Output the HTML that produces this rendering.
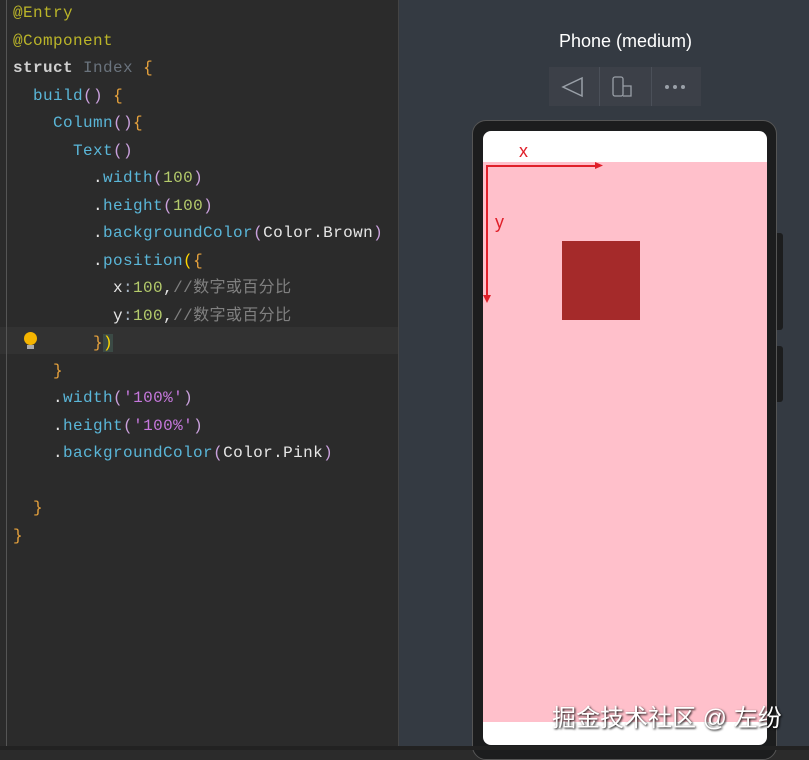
<!DOCTYPE html><html><head><meta charset="utf-8"><style>
body{margin:0;width:809px;height:750px;overflow:hidden;background:#2b2b2b;position:relative;font-family:"Liberation Sans",sans-serif}
#ed{position:absolute;left:0;top:0;width:398px;height:750px;background:#2b2b2b}
.hl{position:absolute;left:0;top:327px;width:398px;height:27px;background:#323232}
.ln{position:absolute;left:13px;font:16px/27px "Liberation Mono","Noto Sans CJK SC",monospace;letter-spacing:0.4px;white-space:pre;color:#a9b7c6}
.a{color:#bbb529}.k{font-weight:bold;color:#d0d0d0}.g{color:#6a737d}.o{color:#e8a33d}.f{color:#5ab6d8}.n{color:#b5cc6c}.p{color:#c678dd}.w{color:#e6e6e6}.c{color:#808080}.q{color:#c9a0dc}
.gut{position:absolute;left:6px;width:1px;background:#555}
#rp{position:absolute;left:398px;top:0;width:411px;height:746px;background:#343a42;border-left:1px solid #444}
.wm{position:absolute;left:552px;top:698px;color:#fff;font-size:24px;font-family:'Liberation Sans','Noto Sans CJK SC',sans-serif;text-shadow:1px 1px 2px #000;white-space:nowrap}
</style></head><body>
<div id="ed"><div class="hl"></div>
<div class="gut" style="top:0;height:750px;left:6px"></div>
<div class="ln" style="top:0px"><span class="a">@Entry</span></div>
<div class="ln" style="top:28px"><span class="a">@Component</span></div>
<div class="ln" style="top:55px"><span class="k">struct</span> <span class="g">Index</span> <span class="o">{</span></div>
<div class="ln" style="top:83px">  <span class="f">build</span><span class="q">()</span> <span class="o">{</span></div>
<div class="ln" style="top:110px">    <span class="f">Column</span><span class="q">()</span><span class="o">{</span></div>
<div class="ln" style="top:138px">      <span class="f">Text</span><span class="q">()</span></div>
<div class="ln" style="top:165px">        <span class="w">.</span><span class="f">width</span><span class="q">(</span><span class="n">100</span><span class="q">)</span></div>
<div class="ln" style="top:193px">        <span class="w">.</span><span class="f">height</span><span class="q">(</span><span class="n">100</span><span class="q">)</span></div>
<div class="ln" style="top:220px">        <span class="w">.</span><span class="f">backgroundColor</span><span class="q">(</span><span class="w">Color.Brown</span><span class="q">)</span></div>
<div class="ln" style="top:248px">        <span class="w">.</span><span class="f">position</span><span style="color:#ffd700">(</span><span class="o">{</span></div>
<div class="ln" style="top:275px">          <span class="w">x</span>:<span class="n">100</span><span class="w">,</span><span class="c">//数字或百分比</span></div>
<div class="ln" style="top:303px">          <span class="w">y</span>:<span class="n">100</span><span class="w">,</span><span class="c">//数字或百分比</span></div>
<div class="ln" style="top:330px">        <span class="o">}</span><span style="color:#ffd700;background:#3b4a45">)</span></div>
<div style="position:absolute;left:24px;top:332px;width:13px;height:13px;border-radius:50%;background:#f4b400"></div>
<div style="position:absolute;left:27px;top:345px;width:7px;height:4px;background:#aaa"></div>
<div class="ln" style="top:358px">    <span class="o">}</span></div>
<div class="ln" style="top:385px">    <span class="w">.</span><span class="f">width</span><span class="q">(</span><span class="p">'100%'</span><span class="q">)</span></div>
<div class="ln" style="top:413px">    <span class="w">.</span><span class="f">height</span><span class="q">(</span><span class="p">'100%'</span><span class="q">)</span></div>
<div class="ln" style="top:440px">    <span class="w">.</span><span class="f">backgroundColor</span><span class="q">(</span><span class="w">Color.Pink</span><span class="q">)</span></div>
<div class="ln" style="top:495px">  <span class="o">}</span></div>
<div class="ln" style="top:523px"><span class="o">}</span></div>
</div>
<div id="rp">
<div style="position:absolute;width:411px;top:31px;text-align:center;color:#fff;font-size:18px;left:21px">Phone (medium)</div>
<div style="position:absolute;left:150px;top:67px;width:152px;height:39px;background:#3c4048"></div>
<div style="position:absolute;left:200px;top:67px;width:1px;height:39px;background:#4b5059"></div>
<div style="position:absolute;left:252px;top:67px;width:1px;height:39px;background:#4b5059"></div>
<svg style="position:absolute;left:150px;top:67px" width="152" height="39"><path d="M33 11 L14 20 L33 29Z" fill="none" stroke="#9aa0a8" stroke-width="1.5"/><rect x="64" y="10" width="10" height="19" rx="2" fill="none" stroke="#9aa0a8" stroke-width="1.3"/><path d="M74 19 h8 v10 h-8" fill="none" stroke="#9aa0a8" stroke-width="1.3"/><circle cx="118" cy="20" r="2" fill="#9aa0a8"/><circle cx="126" cy="20" r="2" fill="#9aa0a8"/><circle cx="134" cy="20" r="2" fill="#9aa0a8"/></svg>
</div>
<div style="position:absolute;left:472px;top:120px;width:305px;height:640px;border-radius:14px;background:#1c1d1e;border:1px solid #555;box-sizing:border-box"></div>
<div style="position:absolute;left:777px;top:233px;width:6px;height:97px;background:#1c1d1e;border-radius:0 3px 3px 0"></div>
<div style="position:absolute;left:777px;top:346px;width:6px;height:56px;background:#1c1d1e;border-radius:0 3px 3px 0"></div>
<div style="position:absolute;left:483px;top:131px;width:284px;height:614px;background:#fff;border-radius:8px;overflow:hidden">
<div style="position:absolute;left:0;top:31px;width:284px;height:560px;background:#ffc0cb"></div>
<div style="position:absolute;left:79px;top:110px;width:78px;height:79px;background:#a52a2a"></div>
</div>
<svg style="position:absolute;left:483px;top:131px" width="200" height="180"><text x="36" y="26" fill="#e0202a" font-size="18" font-family="Liberation Sans">x</text><text x="12" y="97" fill="#e0202a" font-size="18" font-family="Liberation Sans">y</text><path d="M3 35 H112" stroke="#e0202a" stroke-width="2"/><path d="M112 31 L120 34.5 L112 38Z" fill="#e0202a"/><path d="M4 36 V164" stroke="#e0202a" stroke-width="2"/><path d="M0 164 L4 172 L8 164Z" fill="#e0202a"/></svg>
<div style="position:absolute;left:0;top:746px;width:809px;height:4px;background:#222"></div>
<div class="wm">掘金技术社区 @ 左纷</div>
</body></html>
